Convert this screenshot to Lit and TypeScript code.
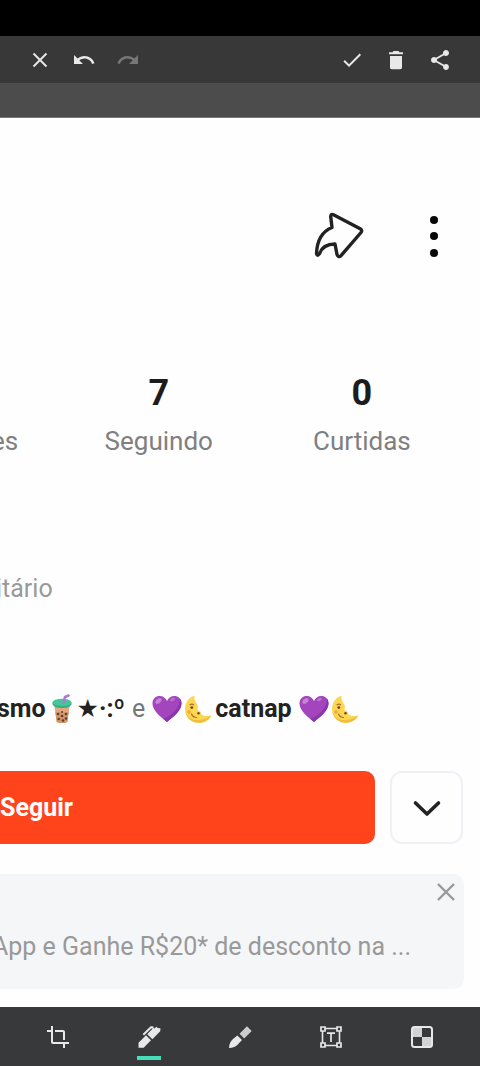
import { LitElement, html, css, svg } from "lit";
import { customElement, state } from "lit/decorators.js";

const heart = html`<svg class="emoji" viewBox="0 0 32 30" role="img" aria-label="💜">
  <path d="M16 28C10 23 1.500 17 1.500 9.500 1.500 4.500 5 2 8.700 2 12 2 14.800 4 16 7 17.200 4 20 2 23.300 2 27 2 30.500 4.500 30.500 9.500 30.500 17 22 23 16 28z" fill="#a346bd"/>
  <path d="M16 28c6-5 14.500-11 14.500-18.500 0-2-.6-3.700-1.500-5C29 15 20 22 12 24.800z" fill="#8d35ad"/>
  <ellipse cx="7.500" cy="7" rx="3.600" ry="2.200" transform="rotate(-38 7.500 7)" fill="#c583d8"/>
  <ellipse cx="21.500" cy="5.500" rx="2.600" ry="1.300" transform="rotate(-30 21.500 5.500)" fill="#bd74d2"/>
</svg>`;

const moon = html`<svg class="emoji" viewBox="0 0 32 30" role="img" aria-label="🌜">
  <path d="M11.500 1.500C5.500 3.500 2 9 2 15.200 2 23 8 28.800 15.500 28.800c6 0 10.500-3 12.800-7.600-3.800 1.500-7.500 1-9.800-1-.8-.8-.3-1.700-1-2.500-1-1-2.800-.8-3-2.200-.1-1.200.7-1.700.5-3C14.200 9 10.500 6.500 11.500 1.500z" fill="#fcd751"/>
  <path d="M2.500 18c2.500 6.500 8 8.500 14 8 4.500-.4 8.500-2 11.800-4.800-2.300 4.600-6.800 7.600-12.800 7.600C9 28.800 4 24.500 2.500 18z" fill="#f2bd3d"/>
  <circle cx="8.800" cy="13.600" r="1.400" fill="#6b4420"/><circle cx="15.500" cy="19.300" r="1.200" fill="#6b4420"/>
  <path d="M7 10.800q2-1.200 3.500 0M8.500 20q1.500 3.500 5 3.500" fill="none" stroke="#a9702b" stroke-width="1.200" stroke-linecap="round"/>
  <circle cx="6" cy="18" r="1.900" fill="#f6ab49"/>
</svg>`;

const cup = html`<svg class="cup" viewBox="0 0 24 30" role="img" aria-label="🧋">
  <path d="M4 9l2.500 18q.2 2 5.500 2t5.500-2L20 9z" fill="#e2a97d"/>
  <path d="M5.300 18l1.200 9q.2 2 5.500 2t5.500-2l1.200-9z" fill="#d49668"/>
  <g fill="#5a4038"><circle cx="8" cy="20" r="1.300"/><circle cx="12" cy="22" r="1.300"/><circle cx="16" cy="20" r="1.300"/><circle cx="8.800" cy="25" r="1.300"/><circle cx="13" cy="26.500" r="1.300"/><circle cx="16" cy="24.500" r="1.300"/><circle cx="12" cy="18" r="1"/></g>
  <ellipse cx="12" cy="8.500" rx="9.500" ry="3.800" fill="#42c79b"/>
  <path d="M2.500 8.500v2q2 3.500 9.500 3.500t9.500-3.500v-2q-2 3.500-9.500 3.500t-9.500-3.500z" fill="#2fae87"/>
  <path d="M13.500 8.500L15 3l3.500-1.500" fill="none" stroke="#ad7bd3" stroke-width="2.600" stroke-linejoin="round" stroke-linecap="round"/>
</svg>`;

const icon = (body: unknown, cls = "icon") =>
  html`<svg class=${cls} viewBox="0 0 24 24" aria-hidden="true">${body}</svg>`;

const tools = [
  { id: "crop", label: "Cortar", art: svg`<path d="M17 15h2V7c0-1.100-.9-2-2-2H9v2h8v8zM7 17V1H5v4H1v2h4v10c0 1.100.9 2 2 2h10v4h2v-4h4v-2H7z"/>` },
  { id: "pen", label: "Caneta", art: svg`<path d="M1.500 22.800v-5L9 10.300l5 5-7.300 7.500zM10.200 9.200l6.200-6.400 1.200.8 1.600-1.800 1.500 1.200 2.800.3-.3 3-7.800 8z"/><path d="M6.300 9.800L14 2.200l2.500.2" fill="none" stroke="currentColor" stroke-width="2"/>` },
  { id: "marker", label: "Marcador", art: svg`<path d="M1 23c.2-4 1.500-6.800 4-9l4.400-3.500 4.600 4.600-4 4.200C7.700 21.800 5 23 1 23z"/><path d="M11.500 8.800L19 1.300l4.700 4.700-7.500 7.500z" opacity=".84"/>` },
  { id: "text", label: "Texto", art: svg`<path d="M6 3.500h12M6 20.500h12M3.500 6v12M20.500 6v12" fill="none" stroke="currentColor" stroke-width="1.600"/><path d="M2 2h4v4H2zM18 2h4v4h-4zM2 18h4v4H2zM18 18h4v4h-4z" fill="none" stroke="currentColor" stroke-width="1.700"/><path d="M8 8.200h8M12 8.200V17" fill="none" stroke="currentColor" stroke-width="1.700"/>` },
  { id: "mosaic", label: "Mosaico", art: svg`<rect x="2" y="2" width="20" height="20" rx="2.500" fill="none" stroke="currentColor" stroke-width="2"/><path d="M3 3h9v9H3zM12 12h9v9h-9z" opacity=".88"/>` },
];

@customElement("app-root")
export class AppRoot extends LitElement {
  @state() private tool = "pen";

  static styles = css`
    :host {
      display: flex;
      flex-direction: column;
      min-height: 100vh;
      overflow: hidden;
      background: #fefefe;
      color: #222;
      font-family: Roboto, "DejaVu Sans", sans-serif;
      font-size: 25px;
      line-height: 32px;
    }
    * { box-sizing: border-box; }
    button {
      display: flex;
      align-items: center;
      justify-content: center;
      padding: 0;
      border: 0;
      background: none;
      color: inherit;
      font: inherit;
      cursor: pointer;
    }
    svg { display: block; flex: none; fill: currentColor; }
    .status { height: 36px; background: #000; }
    .toolbar {
      display: flex;
      justify-content: space-between;
      height: 47px;
      padding: 0 18px;
      background: #383838;
      color: #e8e8e8;
    }
    .group { display: flex; }
    .group button { width: 44px; height: 48px; }
    .group button:disabled { color: #777; }
    .icon { width: 24px; height: 24px; }
    .strip { height: 35px; background: #4c4c4c; border-bottom: 1px solid #777; }
    .page { flex: 1; display: flex; flex-direction: column; overflow: hidden; }
    .actions {
      display: flex;
      justify-content: flex-end;
      gap: 43px;
      padding: 90px 20px 0 0;
    }
    .share { width: 52px; height: 56px; }
    .share svg { width: 52px; height: 52px; }
    .more { width: 52px; height: 56px; color: #080808; }
    .more svg { width: 52px; height: 56px; }
    .stats {
      display: grid;
      grid-template-columns: 13% 42% 1fr;
      padding: 109px 13px 0 0;
      text-align: center;
      color: #808080;
      font-size: 26px;
    }
    .stat { display: flex; flex-direction: column; gap: 12px; }
    .stat strong { height: 40px; color: #1c1c1c; font-size: 36px; line-height: 40px; }
    .cut { align-items: flex-start; margin-left: -9px; }
    .bio { margin: 116px 0 0 -4px; color: #999; }
    .followers {
      display: flex;
      align-items: center;
      margin: 88px 0 0 -3px;
      font-weight: 700;
      white-space: nowrap;
    }
    .emoji { width: 32px; height: 30px; }
    .cup { width: 24px; height: 30px; margin: 0 3px 0 4px; }
    .and { margin: 0 6px 0 7px; color: #777; font-weight: 400; }
    .name { margin: 0 6px 0 0; }
    .followrow { display: flex; gap: 15px; margin: 46px 17px 0 0; }
    .follow {
      flex: 1;
      justify-content: flex-start;
      height: 73px;
      border-radius: 0 10px 10px 0;
      background: #ff431b;
      color: #fff;
      font-weight: 700;
    }
    .expand {
      width: 73px;
      height: 73px;
      border: 2px solid #f1f0f4;
      border-radius: 12px;
    }
    .expand svg { width: 32px; height: 32px; }
    .promo {
      display: flex;
      flex-direction: column;
      height: 115px;
      margin: 30px 16px 16px 0;
      border-radius: 0 10px 10px 0;
      background: #f5f6f8;
      color: #999;
    }
    .close { align-self: flex-end; width: 36px; height: 36px; }
    .promo p { margin: 21px 0 0 -8px; white-space: nowrap; }
    .tools {
      display: flex;
      justify-content: space-around;
      height: 59px;
      padding: 0 12px;
      background: #38393b;
      color: #e8e8e8;
    }
    .tool { width: 48px; height: 60px; position: relative; }
    .tool.on::after {
      content: "";
      position: absolute;
      left: 12px;
      bottom: 7px;
      width: 24px;
      height: 4px;
      background: #43e0ba;
    }
  `;

  render() {
    return html`
      <div class="status"></div>
      <header class="toolbar">
        <div class="group">
          <button aria-label="Fechar">${icon(svg`<path d="M5.500 5.500l13 13M18.500 5.500l-13 13" fill="none" stroke="currentColor" stroke-width="1.900"/>`)}</button>
          <button aria-label="Desfazer">${icon(svg`<path d="M12.500 8c-2.650 0-5.050.99-6.900 2.600L2 7v9h9l-3.620-3.620c1.390-1.160 3.160-1.880 5.120-1.880 3.540 0 6.550 2.310 7.600 5.500l2.370-.78C21.080 11.030 17.150 8 12.500 8z"/>`)}</button>
          <button aria-label="Refazer" disabled>${icon(svg`<path d="M18.400 10.600C16.550 8.990 14.150 8 11.500 8c-4.650 0-8.580 3.030-9.960 7.220L3.900 16c1.050-3.190 4.050-5.500 7.600-5.500 1.950 0 3.730.72 5.120 1.880L13 16h9V7l-3.600 3.600z"/>`)}</button>
        </div>
        <div class="group">
          <button aria-label="Concluir">${icon(svg`<path d="M9 16.170L4.830 12l-1.420 1.410L9 19 21 7l-1.410-1.410z"/>`)}</button>
          <button aria-label="Excluir">${icon(svg`<path d="M6 8v11.500c0 1 .8 1.700 1.800 1.700h8.400c1 0 1.800-.7 1.800-1.700V8zM19 4.300h-3.500l-1-1.300h-5l-1 1.300H5v2h14z"/>`)}</button>
          <button aria-label="Compartilhar">${icon(svg`<path d="M18 16.080c-.76 0-1.440.3-1.960.77L8.910 12.700c.05-.23.09-.46.09-.7s-.04-.47-.09-.7l7.050-4.110c.54.5 1.250.81 2.040.81 1.660 0 3-1.340 3-3s-1.340-3-3-3-3 1.340-3 3c0 .24.04.47.09.7L8.040 9.810C7.500 9.310 6.790 9 6 9c-1.660 0-3 1.340-3 3s1.340 3 3 3c.79 0 1.500-.31 2.040-.81l7.120 4.160c-.05.21-.08.43-.08.65 0 1.610 1.310 2.920 2.920 2.920s2.920-1.310 2.920-2.920-1.310-2.920-2.920-2.920z"/>`)}</button>
        </div>
      </header>
      <div class="strip"></div>
      <main class="page">
        <div class="actions">
          <button class="share" aria-label="Compartilhar perfil">
            <svg viewBox="0 0 52 52"><path d="M20.500 4.800Q18 3.500 17.700 6.500L19 17.500C8 22 4 31 3.500 43.500q.8 3.600 3 .2C9 36.500 14 34 22 34l2 10.500q1.300 3.500 4 1.200L48 22.500q1.700-2.200-.8-3.700z" fill="none" stroke="#222" stroke-width="3.400" stroke-linejoin="round"/></svg>
          </button>
          <button class="more" aria-label="Mais opções">
            <svg viewBox="0 0 52 56"><circle cx="26" cy="12" r="4"/><circle cx="26" cy="28" r="4"/><circle cx="26" cy="45" r="4"/></svg>
          </button>
        </div>
        <section class="stats">
          <div class="stat cut"><strong></strong><span>es</span></div>
          <div class="stat"><strong>7</strong><span>Seguindo</span></div>
          <div class="stat"><strong>0</strong><span>Curtidas</span></div>
        </section>
        <div class="bio">itário</div>
        <div class="followers">
          <span>smo</span>${cup}<span>★·:º</span><span class="and">e</span>${heart}${moon}<span class="name">catnap</span>${heart}${moon}
        </div>
        <div class="followrow">
          <button class="follow">Seguir</button>
          <button class="expand" aria-label="Mostrar sugestões">
            <svg viewBox="0 0 32 32"><path d="M4.500 11L16 22 27.500 11" fill="none" stroke="#222" stroke-width="3.600" stroke-linecap="round" stroke-linejoin="round"/></svg>
          </button>
        </div>
        <aside class="promo">
          <button class="close" aria-label="Fechar anúncio">${icon(svg`<path d="M4 4l16 16M20 4L4 20" fill="none" stroke="#999" stroke-width="2.400"/>`)}</button>
          <p>App e Ganhe R$20* de desconto na ...</p>
        </aside>
      </main>
      <nav class="tools">
        ${tools.map((t) => html`<button
          class="tool ${t.id === this.tool ? "on" : ""}"
          aria-label=${t.label}
          aria-pressed=${t.id === this.tool}
          @click=${() => (this.tool = t.id)}
        >${icon(t.art)}</button>`)}
      </nav>
    `;
  }
}
